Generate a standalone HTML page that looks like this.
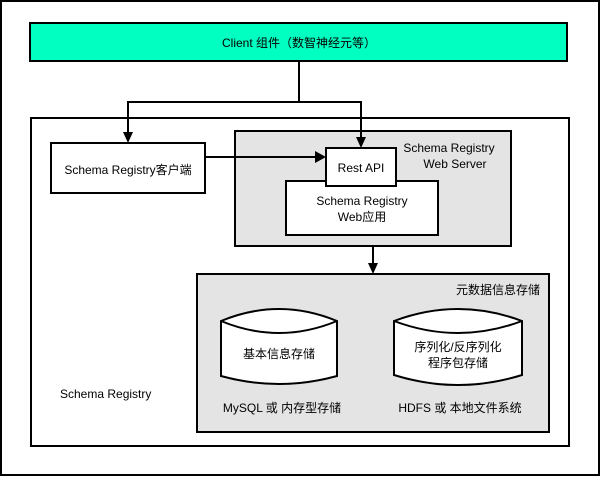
<!DOCTYPE html><html><head><style>body{margin:0}svg text{font-family:"Liberation Sans","Noto Sans CJK SC",sans-serif;font-size:12px}</style></head><body>
<svg width="601" height="477" xmlns="http://www.w3.org/2000/svg">
<rect x="0" y="0" width="601" height="477" fill="#fff"/>
<rect x="1" y="1" width="598" height="474" fill="none" stroke="#000" stroke-width="2"/>
<rect x="30" y="23" width="537" height="38" fill="#00FFC0" stroke="#000" stroke-width="2"/>
<text x="299" y="47" text-anchor="middle">Client 组件（数智神经元等）</text>
<rect x="31" y="118" width="538" height="328" fill="#fff" stroke="#000" stroke-width="2"/>
<rect x="51" y="143" width="154" height="50" fill="#fff" stroke="#000" stroke-width="2"/>
<text x="128" y="174" text-anchor="middle">Schema Registry客户端</text>
<rect x="235" y="131" width="276" height="115" fill="#e4e4e4" stroke="#000" stroke-width="2"/>
<text x="449" y="152" text-anchor="middle">Schema Registry</text>
<text x="455" y="168" text-anchor="middle">Web Server</text>
<rect x="286" y="181" width="152" height="54" fill="#fff" stroke="#000" stroke-width="2"/>
<text x="362" y="205" text-anchor="middle">Schema Registry</text>
<text x="362" y="221" text-anchor="middle">Web应用</text>
<rect x="326" y="148" width="70" height="38" fill="#fff" stroke="#000" stroke-width="2"/>
<text x="361" y="172" text-anchor="middle">Rest API</text>
<polyline points="299,61 299,102 128,102 128,138" fill="none" stroke="#000" stroke-width="2"/>
<polyline points="299,102 361,102 361,142" fill="none" stroke="#000" stroke-width="2"/>
<polygon points="123,132 133,132 128,143" fill="#000"/>
<polygon points="356,137 366,137 361,148" fill="#000"/>
<line x1="205" y1="157" x2="318" y2="157" stroke="#000" stroke-width="2"/>
<polygon points="315,151 326,157 315,163" fill="#000"/>
<line x1="373" y1="246" x2="373" y2="266" stroke="#000" stroke-width="2"/>
<polygon points="368,263 378,263 373,274" fill="#000"/>
<rect x="197" y="274" width="352" height="158" fill="#e4e4e4" stroke="#000" stroke-width="2"/>
<text x="540" y="294" text-anchor="end">元数据信息存储</text>
<path d="M221,321 Q279,297 337,321 L337,376 Q279,392 221,376 Z" fill="#fff" stroke="#000" stroke-width="2"/>
<path d="M221,321 Q279,345 337,321" fill="none" stroke="#000" stroke-width="2"/>
<text x="279" y="358" text-anchor="middle">基本信息存储</text>
<path d="M394,321 Q458,297 522,321 L522,375 Q458,395 394,375 Z" fill="#fff" stroke="#000" stroke-width="2"/>
<path d="M394,321 Q458,345 522,321" fill="none" stroke="#000" stroke-width="2"/>
<text x="458" y="351" text-anchor="middle">序列化/反序列化</text>
<text x="458" y="367" text-anchor="middle">程序包存储</text>
<text x="282" y="412" text-anchor="middle">MySQL 或 内存型存储</text>
<text x="460" y="412" text-anchor="middle">HDFS 或 本地文件系统</text>
<text x="60" y="398">Schema Registry</text>
</svg></body></html>
